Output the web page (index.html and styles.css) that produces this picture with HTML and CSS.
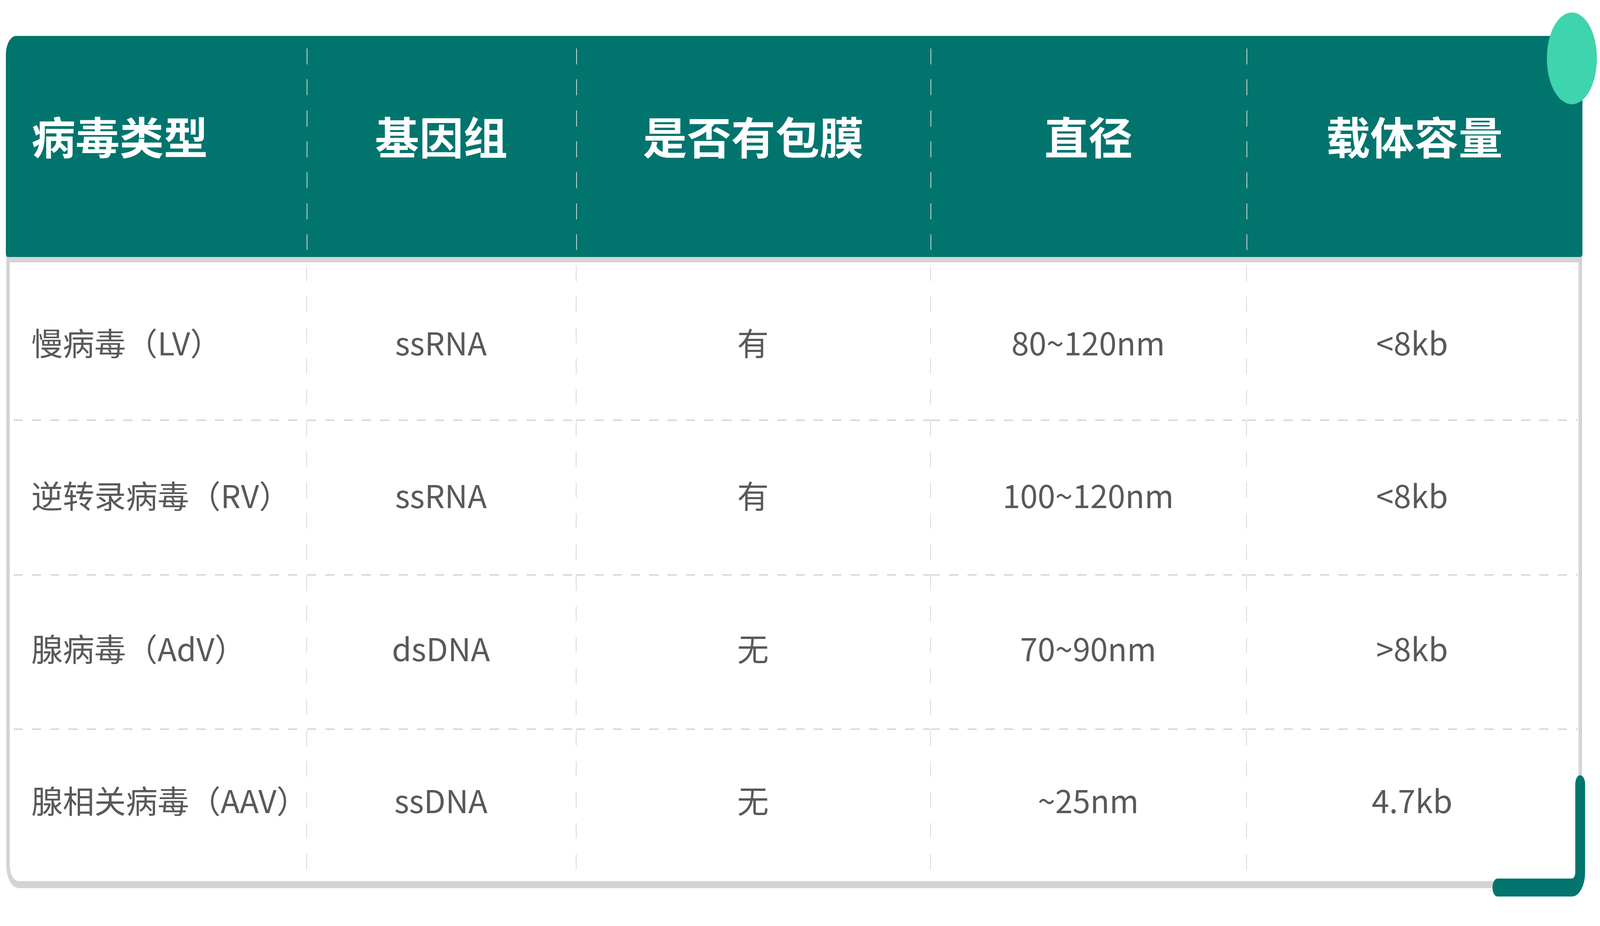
FILE: index.html
```html
<!DOCTYPE html>
<html lang="zh-CN">
<head>
<meta charset="utf-8">
<title>病毒载体比较</title>
<link rel="stylesheet" href="styles.css">
</head>
<body>
<div class="page">
  <div class="table">
    <div class="thead">
      <div class="th first">病毒类型</div>
      <div class="th">基因组</div>
      <div class="th">是否有包膜</div>
      <div class="th">直径</div>
      <div class="th">载体容量</div>
    </div>
    <div class="tbody">
      <div class="tr">
        <div class="td first">慢病毒（LV）</div>
        <div class="td">ssRNA</div>
        <div class="td">有</div>
        <div class="td">80~120nm</div>
        <div class="td">&lt;8kb</div>
      </div>
      <div class="tr">
        <div class="td first">逆转录病毒（RV）</div>
        <div class="td">ssRNA</div>
        <div class="td">有</div>
        <div class="td">100~120nm</div>
        <div class="td">&lt;8kb</div>
      </div>
      <div class="tr">
        <div class="td first">腺病毒（AdV）</div>
        <div class="td">dsDNA</div>
        <div class="td">无</div>
        <div class="td">70~90nm</div>
        <div class="td">&gt;8kb</div>
      </div>
      <div class="tr">
        <div class="td first">腺相关病毒（AAV）</div>
        <div class="td">ssDNA</div>
        <div class="td">无</div>
        <div class="td">~25nm</div>
        <div class="td">4.7kb</div>
      </div>
    </div>
  </div>
  <div class="dot"></div>
  <svg class="bracket" viewBox="0 0 460 330" preserveAspectRatio="none" aria-hidden="true">
    <path d="M418 28 V253.5 A39 39 0 0 1 379 292.5 H30" fill="none" stroke="#01746e" stroke-width="46" stroke-linecap="round" stroke-linejoin="round"/>
  </svg>
</div>
</body>
</html>
```
FILE: styles.css
```css
/* The design is 7500 x 2371; --x and --y are one design pixel of the window's width and height */
:root {
  --x: calc(100vw / 7500);
  --y: calc(100vh / 2371);
}

html,
body {
  margin: 0;
  padding: 0;
  overflow: hidden;
}

body {
  background: #ffffff;
  font-family: "Noto Sans CJK SC", "Noto Sans", sans-serif;
}

.page {
  position: relative;
  width: 100vw;
  height: 100vh;
  padding: calc(92 * var(--y)) 0 0 calc(28 * var(--x));
  box-sizing: border-box;
}

.table {
  width: calc(7389 * var(--x));
}

.thead {
  height: calc(566 * var(--y));
  background: #01746e;
  border-radius: calc(48 * var(--x)) calc(48 * var(--x)) calc(8 * var(--x)) calc(8 * var(--x)) / calc(48 * var(--y)) calc(48 * var(--y)) calc(8 * var(--y)) calc(8 * var(--y));
  display: grid;
  grid-template-columns: calc(1409 * var(--x)) calc(1263 * var(--x)) calc(1662 * var(--x)) calc(1481 * var(--x)) calc(1574 * var(--x));
}

.th {
  display: flex;
  align-items: center;
  justify-content: center;
  box-sizing: border-box;
  padding-bottom: calc(56 * var(--y));
  color: #ffffff;
  font-weight: 700;
  font-size: calc(207 * var(--x));
  line-height: 1;
  white-space: nowrap;
}

.th.first {
  justify-content: flex-start;
  padding-left: calc(119 * var(--x));
}

.th + .th {
  background: repeating-linear-gradient(to bottom, #cbd9d7 0 calc(41 * var(--y)), transparent calc(41 * var(--y)) calc(79.3 * var(--y))) 0 calc(32 * var(--y)) / calc(4 * var(--x)) calc(516 * var(--y)) no-repeat;
}

.tbody {
  --vdash: repeating-linear-gradient(to bottom, #d9d9d9 0 calc(40 * var(--y)), transparent calc(40 * var(--y)) calc(79.3 * var(--y)));
  --vsize: calc(4 * var(--x)) calc(100% - 8 * var(--y));
  margin: 0 calc(1 * var(--x)) 0 calc(2 * var(--x));
  border-style: solid;
  border-color: #d4d4d4;
  border-width: calc(14 * var(--y)) calc(18 * var(--x)) calc(18 * var(--y)) calc(18 * var(--x));
  border-radius: 0 0 calc(58 * var(--x)) calc(58 * var(--x)) / 0 0 calc(58 * var(--y)) calc(58 * var(--y));
  display: grid;
  grid-template-rows: calc(406 * var(--y)) calc(396 * var(--y)) calc(395 * var(--y)) calc(387 * var(--y));
  background:
    var(--vdash) calc(1389 * var(--x)) calc(8 * var(--y)) / var(--vsize) no-repeat,
    var(--vdash) calc(2652 * var(--x)) calc(8 * var(--y)) / var(--vsize) no-repeat,
    var(--vdash) calc(4314 * var(--x)) calc(8 * var(--y)) / var(--vsize) no-repeat,
    var(--vdash) calc(5795 * var(--x)) calc(8 * var(--y)) / var(--vsize) no-repeat,
    #ffffff;
}

.tr {
  display: grid;
  grid-template-columns: calc(1389 * var(--x)) calc(1263 * var(--x)) calc(1662 * var(--x)) calc(1481 * var(--x)) calc(1555 * var(--x));
}

.td {
  display: flex;
  align-items: center;
  justify-content: center;
  box-sizing: border-box;
  color: #595959;
  font-size: calc(148 * var(--x));
  line-height: 1;
  white-space: nowrap;
}

.td.first {
  justify-content: flex-start;
  padding-left: calc(100 * var(--x));
}

.tr:not(:last-child) .td {
  background: repeating-linear-gradient(to right, #d9d9d9 0 calc(43 * var(--x)), transparent calc(43 * var(--x)) calc(85.7 * var(--x))) calc(3 * var(--x)) 100% / 100% calc(4 * var(--y)) no-repeat;
}

.tr:not(:last-child) .td.first {
  background-position: calc(18 * var(--x)) 100%;
}

.tr:nth-child(2) .td {
  padding-bottom: calc(20 * var(--y));
}

.tr:nth-child(3) .td {
  padding-bottom: calc(26 * var(--y));
}

.tr:nth-child(4) .td {
  padding-bottom: calc(31 * var(--y));
}

.dot {
  position: absolute;
  left: calc(7251 * var(--x));
  top: calc(32 * var(--y));
  width: calc(235 * var(--x));
  height: calc(235 * var(--y));
  border-radius: 50%;
  background: #3dd4ae;
}

.bracket {
  position: absolute;
  left: calc(6990 * var(--x));
  top: calc(1980 * var(--y));
  width: calc(460 * var(--x));
  height: calc(330 * var(--y));
  display: block;
}
```
